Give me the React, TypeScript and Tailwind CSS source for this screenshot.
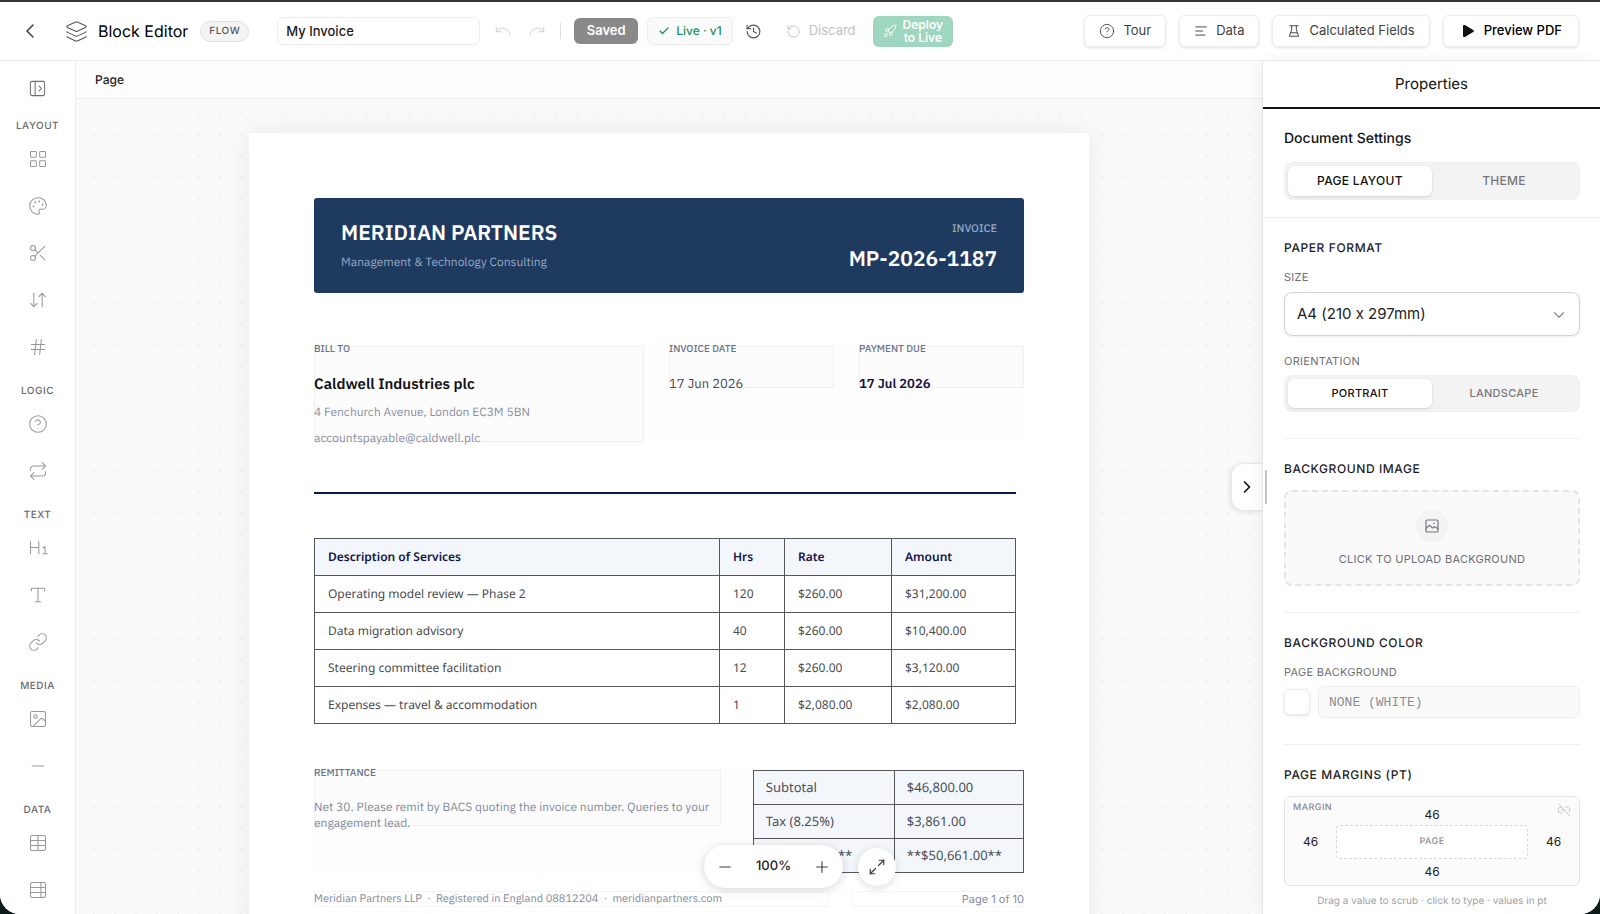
import React, { useState } from "react";
import {
  ArrowDownUp,
  Check,
  ChevronDown,
  ChevronLeft,
  ChevronRight,
  CircleHelp,
  Hash,
  History,
  Image as ImageIcon,
  Layers,
  LayoutGrid,
  Link as LinkIcon,
  Maximize2,
  Minus,
  Palette,
  PanelLeftOpen,
  Plus,
  Redo,
  Repeat,
  Rocket,
  RotateCcw,
  Scissors,
  Type,
  Undo,
} from "lucide-react";

type IconProps = { size?: number; strokeWidth?: number; className?: string };
type IconType = React.ComponentType<IconProps>;

function Glyph({ size = 20, strokeWidth = 1.25, className, children }: IconProps & { children: React.ReactNode }) {
  return (
    <svg
      width={size}
      height={size}
      viewBox="0 0 24 24"
      fill="none"
      stroke="currentColor"
      strokeWidth={strokeWidth}
      strokeLinecap="round"
      strokeLinejoin="round"
      className={className}
      aria-hidden="true"
    >
      {children}
    </svg>
  );
}

const HeadingOne: IconType = (p) => (
  <Glyph {...p}>
    <path d="M3 4v15M13 4v15M3 11.5h10M18 12l2.5-1.8V19M18 19h5" />
  </Glyph>
);

const TableGrid: IconType = (p) => (
  <Glyph {...p}>
    <rect x="3" y="3" width="18" height="18" rx="2" />
    <path d="M12 3v18M3 9h18M3 15h18" />
  </Glyph>
);

const TableSide: IconType = (p) => (
  <Glyph {...p}>
    <rect x="3" y="3" width="18" height="18" rx="2" />
    <path d="M15.5 3v18M3 9h18M3 15h18" />
  </Glyph>
);

const Lines: IconType = (p) => (
  <Glyph {...p}>
    <path d="M3 5h18M3 12h12M3 19h16" />
  </Glyph>
);

const Flask: IconType = (p) => (
  <Glyph {...p}>
    <path d="M5 3h14M8 3v7L4 21h16l-4-11V3M7 15h10" />
  </Glyph>
);

const Picture: IconType = (p) => (
  <Glyph {...p}>
    <rect x="3" y="3" width="18" height="18" rx="2" />
    <path d="M3 16l5-5 5 4 3-2 5 3M14.5 8h1" />
  </Glyph>
);

const Unlinked: IconType = (p) => (
  <Glyph {...p}>
    <path d="M9 17H7A5 5 0 0 1 7 7M15 7h2a5 5 0 0 1 4 8M8 12h4M3 2l19 20" />
  </Glyph>
);

const groups: { label: string; items: { name: string; icon: IconType }[] }[] = [
  {
    label: "LAYOUT",
    items: [
      { name: "Grid", icon: LayoutGrid },
      { name: "Style", icon: Palette },
      { name: "Page break", icon: Scissors },
      { name: "Spacer", icon: ArrowDownUp },
      { name: "Page number", icon: Hash },
    ],
  },
  {
    label: "LOGIC",
    items: [
      { name: "Condition", icon: CircleHelp },
      { name: "Repeat", icon: Repeat },
    ],
  },
  {
    label: "TEXT",
    items: [
      { name: "Heading", icon: HeadingOne },
      { name: "Text", icon: Type },
      { name: "Link", icon: LinkIcon },
    ],
  },
  {
    label: "MEDIA",
    items: [
      { name: "Image", icon: ImageIcon },
      { name: "Divider", icon: Minus },
    ],
  },
  {
    label: "DATA",
    items: [
      { name: "Table", icon: TableGrid },
      { name: "Data table", icon: TableSide },
    ],
  },
];

function HeaderButton({ icon, children, strong }: { icon: React.ReactNode; children: React.ReactNode; strong?: boolean }) {
  return (
    <button
      type="button"
      className={
        "flex h-8 items-center gap-2 rounded-md border border-[#ededee] bg-white text-[13px] shadow-[0_1px_3px_rgba(0,0,0,0.12)] " +
        (strong ? "px-4 font-medium text-black" : "px-3.5 text-[#3f3f42]")
      }
    >
      {icon}
      {children}
    </button>
  );
}

function Header() {
  return (
    <header className="flex h-[59px] shrink-0 items-center border-b border-[#ededed] bg-white pr-[21px] pl-[18px]">
      <button type="button" aria-label="Back" className="text-[#3f3f42]">
        <ChevronLeft size={24} strokeWidth={1.5} />
      </button>
      <Layers size={23} strokeWidth={1.1} className="ml-[23px] text-[#55555a]" />
      <h1 className="ml-2.5 text-base text-black">Block Editor</h1>
      <span className="ml-3 flex h-[21px] items-center rounded-full border border-[#e2e2e4] bg-[#f4f4f5] px-2 text-[10px] font-medium tracking-wider text-[#55555a]">
        FLOW
      </span>
      <input
        aria-label="Document name"
        defaultValue="My Invoice"
        className="ml-7 h-7 w-[203px] rounded-md border border-[#ededee] bg-white px-2 text-[13px] font-medium text-[#1c1c1e] outline-none"
      />
      <button type="button" aria-label="Undo" className="ml-3.5 text-[#cfcfd2]">
        <Undo size={18} strokeWidth={1.3} />
      </button>
      <button type="button" aria-label="Redo" className="ml-4 text-[#cfcfd2]">
        <Redo size={18} strokeWidth={1.3} />
      </button>
      <span className="ml-3.5 h-4 w-px bg-[#dedee0]" />
      <button type="button" className="ml-[13px] h-[26px] w-16 rounded-md bg-[#89898a] text-[13px] font-semibold text-white">
        Saved
      </button>
      <span className="ml-[9px] flex h-7 items-center gap-1.5 rounded-md border border-[#ededee] bg-[#fafafa] px-2.5 text-xs font-medium text-[#1f8f5f]">
        <Check size={12} strokeWidth={2.5} />
        Live · v1
      </span>
      <button type="button" aria-label="Version history" className="ml-3 text-[#55555a]">
        <History size={17} strokeWidth={1.6} />
      </button>
      <button type="button" className="ml-6 flex items-center gap-2 text-[13px] text-[#c2c2c5]">
        <RotateCcw size={15} strokeWidth={1.6} />
        Discard
      </button>
      <button
        type="button"
        className="ml-[17px] flex h-[31px] items-center gap-1.5 rounded-md bg-[#9fd6bf] px-2.5 text-center text-xs leading-[13px] font-semibold text-white"
      >
        <Rocket size={14} strokeWidth={1.6} />
        <span>
          Deploy
          <br />
          to Live
        </span>
      </button>
      <div className="ml-auto flex items-center gap-[13px]">
        <HeaderButton icon={<CircleHelp size={16} strokeWidth={1.3} />}>Tour</HeaderButton>
        <HeaderButton icon={<Lines size={14} strokeWidth={1.6} />}>Data</HeaderButton>
        <HeaderButton icon={<Flask size={14} strokeWidth={1.6} />}>Calculated Fields</HeaderButton>
        <HeaderButton
          strong
          icon={
            <svg width="16" height="16" viewBox="0 0 16 16" fill="#111" aria-hidden="true">
              <path d="M3 3.2c0-1 1-1.600 1.900-1.100l8.300 4.800c.9.500.9 1.700 0 2.200l-8.300 4.800c-.9.500-1.900-.1-1.900-1.100z" />
            </svg>
          }
        >
          Preview PDF
        </HeaderButton>
      </div>
    </header>
  );
}

function Sidebar() {
  return (
    <nav aria-label="Blocks" className="flex w-[76px] shrink-0 flex-col items-center overflow-hidden border-r border-[#ececec] bg-white pt-[18px]">
      <button type="button" aria-label="Expand panel" className="mb-[19px] shrink-0 text-[#6f6f74]">
        <PanelLeftOpen size={19} strokeWidth={1.3} />
      </button>
      {groups.map((g) => (
        <section key={g.label} className="mb-3 flex w-full shrink-0 flex-col items-center">
          <h2 className="text-[10px] leading-[18px] font-medium tracking-wider text-[#68686d]">{g.label}</h2>
          {g.items.map(({ name, icon: Icon }) => (
            <button key={name} type="button" aria-label={name} className="flex h-[47px] w-full items-center justify-center text-[#98989d]">
              <Icon size={20} strokeWidth={1.25} />
            </button>
          ))}
        </section>
      ))}
    </nav>
  );
}

const services = [
  ["Operating model review — Phase 2", "120", "$260.00", "$31,200.00"],
  ["Data migration advisory", "40", "$260.00", "$10,400.00"],
  ["Steering committee facilitation", "12", "$260.00", "$3,120.00"],
  ["Expenses — travel & accommodation", "1", "$2,080.00", "$2,080.00"],
];

const totals = [
  ["Subtotal", "$46,800.00"],
  ["Tax (8.25%)", "$3,861.00"],
  ["**Total Due**", "**$50,661.00**"],
];

function BlockLabel({ children }: { children: React.ReactNode }) {
  return <h3 className="text-[10px] leading-[6px] font-medium whitespace-nowrap text-[#6b7489]">{children}</h3>;
}

function Invoice() {
  return (
    <article className="mx-auto w-[840px] shrink-0 bg-white px-[65px] pt-[65px] pb-16 font-['IBM_Plex_Sans','Noto_Sans',sans-serif] shadow-[0_0_24px_rgba(0,0,0,0.07)]">
      <div className="flex h-[95px] items-start justify-between rounded-[3px] bg-[#1f3a5f] px-[27px] pt-[18px]">
        <div>
          <h2 className="text-[21px] leading-8 font-semibold text-white">MERIDIAN PARTNERS</h2>
          <p className="mt-[5px] text-xs leading-5 text-[#94a8c2]">Management &amp; Technology Consulting</p>
        </div>
        <div className="text-right">
          <p className="text-[11px] leading-[26px] font-medium text-[#94a8c2]">INVOICE</p>
          <p className="text-[21px] leading-8 font-semibold text-white">MP-2026-1187</p>
        </div>
      </div>

      <div className="mt-[53px] grid grid-cols-[2fr_1fr_1fr] items-start gap-[25px] bg-[#fdfdfd]">
        <div className="h-24 bg-[#fcfcfd] ring-1 ring-[#f0f0f2] ring-inset">
          <BlockLabel>BILL TO</BlockLabel>
          <p className="mt-[21px] text-[15px] leading-6 font-semibold text-[#111]">Caldwell Industries plc</p>
          <p className="mt-1.5 text-xs leading-5 text-[#8a90a0]">4 Fenchurch Avenue, London EC3M 5BN</p>
          <p className="mt-1.5 text-xs leading-5 text-[#8a90a0]">accountspayable@caldwell.plc</p>
        </div>
        <div className="h-[42px] bg-[#fcfcfd] ring-1 ring-[#f0f0f2] ring-inset">
          <BlockLabel>INVOICE DATE</BlockLabel>
          <p className="mt-5 text-[13px] leading-6 text-[#4b4b50]">17 Jun 2026</p>
        </div>
        <div className="h-[42px] bg-[#fcfcfd] ring-1 ring-[#f0f0f2] ring-inset">
          <BlockLabel>PAYMENT DUE</BlockLabel>
          <p className="mt-5 text-[13px] leading-6 font-semibold text-[#151540]">17 Jul 2026</p>
        </div>
      </div>

      <hr className="mt-[50px] mr-2 border-0 border-t-2 border-[#0b1350]" />

      <div className="mt-11 mr-2">
        <table className="w-full table-fixed border-collapse font-['Noto_Sans',sans-serif] text-xs text-[#4b4b50]">
          <colgroup>
            <col />
            <col className="w-[65px]" />
            <col className="w-[107px]" />
            <col className="w-[124px]" />
          </colgroup>
          <thead>
            <tr className="h-[37px] bg-[#f3f7fb] text-left text-[#151548]">
              {["Description of Services", "Hrs", "Rate", "Amount"].map((h) => (
                <th key={h} className="border border-[#55555a] px-[13px] font-semibold">
                  {h}
                </th>
              ))}
            </tr>
          </thead>
          <tbody>
            {services.map((row) => (
              <tr key={row[0]} className="h-[37px]">
                {row.map((cell, i) => (
                  <td key={i} className="border border-[#55555a] px-[13px]">
                    {cell}
                  </td>
                ))}
              </tr>
            ))}
          </tbody>
        </table>
      </div>

      <div className="mt-[46px] grid grid-cols-[3fr_2fr] items-start gap-8 bg-[#fdfdfd]">
        <div className="h-14 bg-[#fcfcfd] ring-1 ring-[#f0f0f2] ring-inset">
          <BlockLabel>REMITTANCE</BlockLabel>
          <p className="mt-6 text-xs leading-4 text-[#858c9c]">
            Net 30. Please remit by BACS quoting the invoice number. Queries to your engagement lead.
          </p>
        </div>
        <table className="w-full table-fixed border-collapse bg-[#f3f7fb] font-['Noto_Sans',sans-serif] text-[13px] text-[#4b4f58]">
          <colgroup>
            <col className="w-[141px]" />
            <col />
          </colgroup>
          <tbody>
            {totals.map(([k, v]) => (
              <tr key={k} className="h-[34px]">
                <td className="border border-[#55555a] px-3">{k}</td>
                <td className="border border-[#55555a] px-3">{v}</td>
              </tr>
            ))}
          </tbody>
        </table>
      </div>

      <footer className="mt-[18px] grid grid-cols-[3fr_1fr] gap-[23px] text-[11px] leading-4 text-[#858c9c]">
        <p className="whitespace-pre ring-1 ring-[#f5f5f6] ring-inset">{"Meridian Partners LLP  ·  Registered in England 08812204  ·  meridianpartners.com"}</p>
        <p className="text-right font-['Inter',sans-serif] ring-1 ring-[#f5f5f6] ring-inset">Page 1 of 10</p>
      </footer>
    </article>
  );
}

function Canvas() {
  const [zoom, setZoom] = useState(100);
  return (
    <main className="relative flex min-w-0 flex-1 flex-col">
      <div className="flex h-[38px] shrink-0 items-center border-b border-[#ececec] bg-[#fdfdfd] px-[19px] text-xs font-medium text-[#222]">
        Page
      </div>
      <div className="min-h-0 flex-1 overflow-hidden bg-[#fafafa] bg-[radial-gradient(circle,#ededed_1px,transparent_1px)] bg-[size:21px_21px] bg-[position:8px_5px] pt-[34px]">
        <Invoice />
      </div>
      <div className="absolute bottom-[26px] left-1/2 flex -translate-x-1/2 items-center gap-[15px] pl-[262px]">
        <div className="flex h-[43px] w-[139px] items-center justify-between rounded-full bg-white px-3 text-[#3f3f42] shadow-[0_2px_10px_rgba(0,0,0,0.16)]">
          <button type="button" aria-label="Zoom out" onClick={() => setZoom(Math.max(10, zoom - 10))}>
            <Minus size={18} strokeWidth={1.5} />
          </button>
          <span className="text-[13px] font-medium text-[#222]">{zoom}%</span>
          <button type="button" aria-label="Zoom in" onClick={() => setZoom(zoom + 10)}>
            <Plus size={18} strokeWidth={1.5} />
          </button>
        </div>
        <button
          type="button"
          aria-label="Fit to screen"
          className="flex size-[38px] items-center justify-center rounded-full bg-white text-[#3f3f42] shadow-[0_2px_8px_rgba(0,0,0,0.14)]"
        >
          <Maximize2 size={18} strokeWidth={1.6} />
        </button>
      </div>
      <button
        type="button"
        aria-label="Collapse properties"
        className="absolute top-[402px] right-0 flex h-12 w-[31px] items-center justify-center rounded-l-xl border border-r-0 border-[#e8e8e8] bg-white text-[#111] shadow-[-1px_1px_5px_rgba(0,0,0,0.1)]"
      >
        <ChevronRight size={20} strokeWidth={2} />
      </button>
    </main>
  );
}

function Segmented({ options, size }: { options: [string, string]; size: "lg" | "sm" }) {
  const [active, setActive] = useState(0);
  return (
    <div className={"grid grid-cols-2 rounded-lg border border-[#efefef] bg-[#f3f3f4] p-[3px] " + (size === "lg" ? "h-[38px] text-xs" : "h-[37px] text-[11px]")}>
      {options.map((o, i) => (
        <button
          key={o}
          type="button"
          aria-pressed={i === active}
          onClick={() => setActive(i)}
          className={
            "rounded-md font-medium tracking-wide " +
            (i === active ? "bg-white text-[#111] shadow-[0_1px_3px_rgba(0,0,0,0.14)]" : "text-[#77777c]")
          }
        >
          {o}
        </button>
      ))}
    </div>
  );
}

function Section({ title, children, last }: { title: string; children: React.ReactNode; last?: boolean }) {
  return (
    <section className={last ? "" : "mb-5 border-b border-[#f0f0f0] pb-[26px]"}>
      <h3 className="text-xs leading-5 font-medium tracking-wider text-[#1c1c1e]">{title}</h3>
      {children}
    </section>
  );
}

const fieldLabel = "block text-[11px] leading-4 tracking-wide text-[#6f6f74]";

function MarginInput({ side, className }: { side: string; className?: string }) {
  return (
    <input
      aria-label={side + " margin"}
      defaultValue="46"
      className={"h-4 w-8 bg-transparent text-center text-xs text-[#222] outline-none " + (className ?? "")}
    />
  );
}

function Properties() {
  return (
    <aside className="relative z-10 flex w-[338px] shrink-0 flex-col overflow-hidden border-l border-[#e6e6e6] bg-white shadow-[-2px_0_14px_rgba(0,0,0,0.06)]">
      <div className="flex h-12 shrink-0 items-center justify-center border-b-2 border-[#111] text-[15px] text-[#111]">Properties</div>
      <span className="absolute top-[409px] left-0.5 h-[34px] w-0.5 bg-[#c4c4c6]" />
      <div className="border-b border-[#ededed] pt-[19px] pr-5 pb-[17px] pl-[21px]">
        <h2 className="mb-3 text-sm leading-[22px] font-medium text-[#111]">Document Settings</h2>
        <Segmented size="lg" options={["PAGE LAYOUT", "THEME"]} />
      </div>
      <div className="pt-5 pr-5 pl-[21px]">
        <Section title="PAPER FORMAT">
          <label htmlFor="paper-size" className={fieldLabel + " mt-[11px]"}>
            SIZE
          </label>
          <div className="relative mt-[7px]">
            <select
              id="paper-size"
              className="h-11 w-full appearance-none rounded-lg border border-[#d2d2d5] bg-white px-3 text-[15px] text-[#222] shadow-[0_1px_2px_rgba(0,0,0,0.08)] outline-none [font-feature-settings:'calt'_0]"
            >
              <option>A4 (210 x 297mm)</option>
            </select>
            <ChevronDown size={18} strokeWidth={1.5} className="pointer-events-none absolute top-3.5 right-3 text-[#88888c]" />
          </div>
          <p className={fieldLabel + " mt-[17px] mb-1.5"}>ORIENTATION</p>
          <Segmented size="sm" options={["PORTRAIT", "LANDSCAPE"]} />
        </Section>
        <Section title="BACKGROUND IMAGE">
          <button
            type="button"
            className="mt-[11px] flex h-24 w-full flex-col items-center justify-center rounded-lg border-2 border-dashed border-[#e4e4e6] bg-[#fafafa] text-[11px] tracking-wide text-[#6f6f74]"
          >
            <span className="mt-0.5 mb-[9px] flex size-8 items-center justify-center rounded-full bg-[#f3f3f4] text-[#77777c]">
              <Picture size={16} strokeWidth={1.8} />
            </span>
            CLICK TO UPLOAD BACKGROUND
          </button>
        </Section>
        <Section title="BACKGROUND COLOR">
          <label htmlFor="page-bg" className={fieldLabel + " mt-[11px]"}>
            PAGE BACKGROUND
          </label>
          <div className="mt-1.5 flex items-center gap-2">
            <button
              type="button"
              aria-label="Pick background color"
              className="size-[26px] shrink-0 rounded-md border border-[#ededee] bg-white shadow-[0_1px_3px_rgba(0,0,0,0.12)]"
            />
            <input
              id="page-bg"
              placeholder="NONE (WHITE)"
              className="h-8 min-w-0 flex-1 rounded-md border border-[#ededee] bg-[#fafafa] px-2.5 font-['Liberation_Mono',monospace] text-[13px] outline-none placeholder:text-[#8d8d92]"
            />
          </div>
        </Section>
        <Section title="PAGE MARGINS (PT)" last>
          <div className="relative mt-[11px] grid h-[90px] grid-cols-[51px_1fr_51px] grid-rows-[28px_34px_26px] items-center justify-items-center rounded-md border border-[#e4e4e6] bg-[#fbfbfb]">
            <span className="absolute top-1 left-2 text-[9px] leading-[14px] font-medium tracking-wider text-[#88888c]">MARGIN</span>
            <button type="button" aria-label="Link margins" className="absolute top-1.5 right-2 text-[#c4c4c8]">
              <Unlinked size={14} strokeWidth={1.7} />
            </button>
            <MarginInput side="Top" className="col-start-2 mt-2" />
            <MarginInput side="Left" className="col-start-1" />
            <span className="flex h-full w-full items-center justify-center rounded border border-dashed border-[#d8d8db] bg-white text-[9px] font-medium tracking-wider text-[#8d8d92]">
              PAGE
            </span>
            <MarginInput side="Right" />
            <MarginInput side="Bottom" className="col-start-2" />
          </div>
          <p className="mt-1.5 text-center text-[10px] leading-[18px] text-[#a0a0a5]">Drag a value to scrub · click to type · values in pt</p>
        </Section>
      </div>
    </aside>
  );
}

export default function App() {
  return (
    <div className="h-screen overflow-hidden bg-[#0c1a1a] font-['Inter',sans-serif] [text-rendering:geometricPrecision]">
      <div className="flex h-full flex-col overflow-hidden rounded-b-[20px] border-t-2 border-[#343436] bg-white">
        <Header />
        <div className="flex min-h-0 flex-1">
          <Sidebar />
          <Canvas />
          <Properties />
        </div>
      </div>
    </div>
  );
}
